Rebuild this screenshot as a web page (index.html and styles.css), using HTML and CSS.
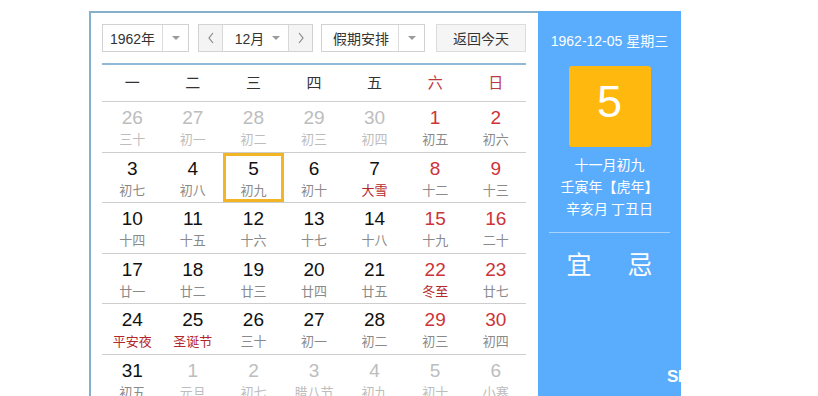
FILE: index.html
```html
<!DOCTYPE html>
<html lang="zh-CN">
<head>
<meta charset="utf-8">
<title>万年历</title>
<link rel="stylesheet" href="styles.css">
</head>
<body>
<div class="cal">
  <div class="main">
    <div class="toolbar">
      <div class="sel year"><span class="sel-text">1962年</span><span class="sel-arrow"><i class="tri"></i></span></div>
      <div class="month-group">
        <span class="nav"><svg width="8" height="12" viewBox="0 0 8 12"><polyline points="6,1 2,6 6,11" fill="none" stroke="#888" stroke-width="1.2"/></svg></span>
        <span class="month"><span class="month-text">12月</span><i class="tri"></i></span>
        <span class="nav"><svg width="8" height="12" viewBox="0 0 8 12"><polyline points="2,1 6,6 2,11" fill="none" stroke="#888" stroke-width="1.2"/></svg></span>
      </div>
      <div class="sel holiday"><span class="sel-text">假期安排</span><span class="sel-arrow"><i class="tri"></i></span></div>
      <div class="today">返回今天</div>
    </div>
    <div class="weekhead">
      <span>一</span><span>二</span><span>三</span><span>四</span><span>五</span><span class="we">六</span><span class="we">日</span>
    </div>
    <div class="grid">
      <div class="cell other"><b>26</b><em>三十</em></div>
      <div class="cell other"><b>27</b><em>初一</em></div>
      <div class="cell other"><b>28</b><em>初二</em></div>
      <div class="cell other"><b>29</b><em>初三</em></div>
      <div class="cell other"><b>30</b><em>初四</em></div>
      <div class="cell weekend"><b>1</b><em>初五</em></div>
      <div class="cell weekend"><b>2</b><em>初六</em></div>

      <div class="cell"><b>3</b><em>初七</em></div>
      <div class="cell"><b>4</b><em>初八</em></div>
      <div class="cell selected"><b>5</b><em>初九</em></div>
      <div class="cell"><b>6</b><em>初十</em></div>
      <div class="cell"><b>7</b><em class="fest">大雪</em></div>
      <div class="cell weekend"><b>8</b><em>十二</em></div>
      <div class="cell weekend"><b>9</b><em>十三</em></div>

      <div class="cell"><b>10</b><em>十四</em></div>
      <div class="cell"><b>11</b><em>十五</em></div>
      <div class="cell"><b>12</b><em>十六</em></div>
      <div class="cell"><b>13</b><em>十七</em></div>
      <div class="cell"><b>14</b><em>十八</em></div>
      <div class="cell weekend"><b>15</b><em>十九</em></div>
      <div class="cell weekend"><b>16</b><em>二十</em></div>

      <div class="cell"><b>17</b><em>廿一</em></div>
      <div class="cell"><b>18</b><em>廿二</em></div>
      <div class="cell"><b>19</b><em>廿三</em></div>
      <div class="cell"><b>20</b><em>廿四</em></div>
      <div class="cell"><b>21</b><em>廿五</em></div>
      <div class="cell weekend"><b>22</b><em class="fest">冬至</em></div>
      <div class="cell weekend"><b>23</b><em>廿七</em></div>

      <div class="cell"><b>24</b><em class="fest">平安夜</em></div>
      <div class="cell"><b>25</b><em class="fest">圣诞节</em></div>
      <div class="cell"><b>26</b><em>三十</em></div>
      <div class="cell"><b>27</b><em>初一</em></div>
      <div class="cell"><b>28</b><em>初二</em></div>
      <div class="cell weekend"><b>29</b><em>初三</em></div>
      <div class="cell weekend"><b>30</b><em>初四</em></div>

      <div class="cell"><b>31</b><em>初五</em></div>
      <div class="cell other"><b>1</b><em>元旦</em></div>
      <div class="cell other"><b>2</b><em>初七</em></div>
      <div class="cell other"><b>3</b><em>腊八节</em></div>
      <div class="cell other"><b>4</b><em>初九</em></div>
      <div class="cell other"><b>5</b><em>初十</em></div>
      <div class="cell other"><b>6</b><em>小寒</em></div>
    </div>
  </div>
  <div class="side">
    <div class="side-date">1962-12-05 星期三</div>
    <div class="big-day">5</div>
    <div class="lunar">
      <div>十一月初九</div>
      <div>壬寅年<strong>【</strong>虎年<strong>】</strong></div>
      <div>辛亥月 丁丑日</div>
    </div>
    <div class="sep"></div>
    <div class="yiji"><span>宜</span><span>忌</span></div>
  </div>
</div>
<div class="watermark">Shancun.net</div>
</body>
</html>
```

FILE: styles.css
```css
html, body {
  margin: 0;
  padding: 0;
  background: #fff;
  overflow: hidden;
  height: 396px;
}
body {
  position: relative;
  font-family: "Liberation Sans", "Noto Sans CJK SC", sans-serif;
  color: #222;
}
.cal {
  display: flex;
  margin: 11px 0 0 89px;
  height: 385px;
}
.main {
  width: 449px;
  box-sizing: border-box;
  border-left: 2px solid #86b0c9;
  border-top: 2px solid #86b0c9;
  padding: 11px 12px 0 11px;
}
.toolbar {
  display: flex;
  height: 28px;
  font-size: 14px;
  color: #333;
}
.sel {
  display: flex;
  box-sizing: border-box;
  height: 28px;
  border: 1px solid #d2d2d2;
  background: #fff;
}
.sel-text {
  display: flex;
  align-items: center;
  justify-content: center;
  flex: 1;
  border-right: 1px solid #dcdcdc;
}
.sel-arrow {
  width: 25px;
  display: flex;
  align-items: center;
  justify-content: center;
}
.tri {
  display: block;
  width: 0;
  height: 0;
  border-left: 4px solid transparent;
  border-right: 4px solid transparent;
  border-top: 4px solid #9a9a9a;
}
.year {
  width: 87px;
}
.month-group {
  display: flex;
  box-sizing: border-box;
  width: 115px;
  height: 28px;
  margin-left: 9px;
  border: 1px solid #d2d2d2;
}
.nav {
  width: 23px;
  display: flex;
  align-items: center;
  justify-content: center;
  background: #f4f4f4;
}
.month {
  flex: 1;
  display: flex;
  align-items: center;
  justify-content: center;
  gap: 8px;
  border-left: 1px solid #d8d8d8;
  border-right: 1px solid #d8d8d8;
  padding-left: 4px;
  background: #fff;
}
.holiday {
  width: 104px;
  margin-left: 8px;
}
.holiday .sel-text {
  padding-left: 2px;
}
.today {
  width: 90px;
  box-sizing: border-box;
  margin-left: 11px;
  border: 1px solid #dcdcdc;
  background: #f5f5f5;
  display: flex;
  align-items: center;
  justify-content: center;
}
.weekhead {
  display: grid;
  grid-template-columns: repeat(7, 1fr);
  margin-top: 11px;
  height: 36px;
  border-top: 2px solid #8fb9d6;
  border-bottom: 1px solid #cfcfcf;
  font-family: "Noto Sans CJK SC", sans-serif;
  font-size: 15px;
  color: #333;
}
.weekhead span {
  display: flex;
  align-items: center;
  justify-content: center;
  padding-bottom: 3px;
}
.weekhead .we {
  color: #c0393f;
}
.grid {
  display: grid;
  grid-template-columns: repeat(7, 1fr);
  grid-auto-rows: 50.5px;
}
.cell {
  box-sizing: border-box;
  border-bottom: 1px solid #cdcdcd;
  display: flex;
  flex-direction: column;
  align-items: center;
  padding-top: 6px;
}
.cell b {
  font-weight: normal;
  font-size: 19px;
  line-height: 20px;
  color: #111;
}
.cell em {
  font-style: normal;
  font-family: "Noto Sans CJK SC", sans-serif;
  font-size: 13px;
  line-height: 16px;
  margin-top: 3px;
  color: #8a8a8a;
}
.cell.weekend b {
  color: #cc3438;
}
.cell em.fest {
  color: #b4282d;
}
.cell.other b {
  color: #bdbdbd;
}
.cell.other em {
  color: #bdbdbd;
}
.cell.selected {
  box-shadow: inset 0 0 0 3px #f2b526;
}
.side {
  width: 143px;
  background: #5aacfd;
  color: #fff;
  display: flex;
  flex-direction: column;
  align-items: center;
}
.side-date {
  margin-top: 20px;
  font-size: 14px;
  line-height: 20px;
}
.big-day {
  margin-top: 15px;
  width: 82px;
  height: 81px;
  background: #ffb80e;
  border-radius: 3px;
  font-size: 45px;
  line-height: 71px;
  text-align: center;
}
.lunar {
  margin-top: 6px;
  font-family: "Noto Sans CJK SC", sans-serif;
  font-size: 14px;
  line-height: 22px;
  text-align: center;
}
.lunar strong {
  font-weight: bold;
}
.sep {
  align-self: stretch;
  margin: 13px 11px 0;
  height: 1px;
  background: #a9d2fb;
}
.yiji {
  margin-top: 15px;
  display: flex;
  gap: 36px;
  font-family: "Noto Sans CJK SC", sans-serif;
  font-size: 25px;
  line-height: 30px;
  letter-spacing: 0;
}
.watermark {
  position: absolute;
  left: 667px;
  top: 367px;
  font-family: "Liberation Sans", sans-serif;
  font-weight: bold;
  font-size: 17px;
  color: #fff;
  letter-spacing: -0.5px;
}
```
